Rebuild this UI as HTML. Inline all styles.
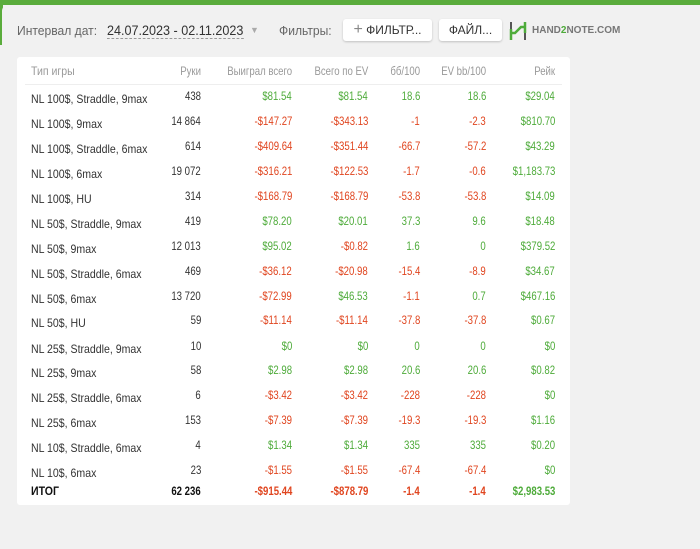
<!DOCTYPE html>
<html><head><meta charset="utf-8"><style>
body{margin:0;width:700px;height:549px;background:#f1f1f1;font-family:"Liberation Sans",sans-serif;position:relative;overflow:hidden}
.gt{position:absolute;left:0;top:0;width:700px;height:5px;background:#5aac3c}
.gl{position:absolute;left:0;top:0;width:3px;height:45px;background:#5aac3c}
.in{position:absolute;left:2px;top:5px;width:698px;height:544px;background:#f1f1f1;border-top-left-radius:6px}
.t{position:absolute;font-size:13px;color:#666;white-space:nowrap}
.btn{position:absolute;top:19px;height:22px;background:#fff;border-radius:3px;box-shadow:0 1px 2px rgba(0,0,0,.2);font-size:12px;color:#333;line-height:22px;text-align:center}
.card{position:absolute;left:17px;top:57px;width:553px;height:448px;background:#fff;border-radius:3px}
.r{position:absolute;left:0;width:553px;height:16px;font-size:12px;color:#333}
.r span{position:absolute;top:0;white-space:nowrap;transform:scaleX(.8);transform-origin:right}
.r .n{left:14px;top:3px;transform:scaleX(.88);transform-origin:left}
.r .c1{right:369px}.r .c2{right:278px}.r .c3{right:202px}.r .c4{right:150px}.r .c5{right:84px}.r .c6{right:15px}
.g{color:#4eab3a}.d{color:#e0451f}
.h{color:#999}
.b{font-weight:bold;color:#111}
</style></head><body>
<div class="gt"></div><div class="gl"></div><div class="in"></div>
<div class="t" style="left:17px;top:23px;transform:scaleX(.93);transform-origin:left">Интервал дат:</div>
<div class="t" style="left:107px;top:22px;color:#333;font-size:14px;border-bottom:1px dashed #999;transform:scaleX(.9);transform-origin:left">24.07.2023 - 02.11.2023</div>
<div class="t" style="left:250px;top:25px;color:#aaa;font-size:9px">▼</div>
<div class="t" style="left:279px;top:23px;transform:scaleX(.93);transform-origin:left">Фильтры:</div>
<div class="btn" style="left:343px;width:89px"><span style="color:#888;font-size:16px">+</span> ФИЛЬТР...</div>
<div class="btn" style="left:439px;width:63px">ФАЙЛ...</div>
<svg style="position:absolute;left:508px;top:20px" width="20" height="22"><path d="M3 2v7M17 13v7" stroke="#555" stroke-width="2" fill="none"/><path d="M3 9v11M17 2v11M3 13h4l6-6h4" stroke="#4eab3a" stroke-width="2.5" fill="none"/></svg>
<div class="t" style="left:532px;top:25px;font-size:10px;font-weight:bold;color:#777">HAND<span style="color:#4eab3a">2</span>NOTE.COM</div>
<div class="card">
<div class="r h" style="top:7px"><span class="n" style="top:0">Тип игры</span><span class="c1">Руки</span><span class="c2">Выиграл всего</span><span class="c3">Всего по EV</span><span class="c4">бб/100</span><span class="c5">EV bb/100</span><span class="c6">Рейк</span></div>
<div style="position:absolute;left:8px;right:8px;top:27px;border-top:1px solid #eee"></div>
<div class="r" style="top:32px"><span class="n">NL 100$, Straddle, 9max</span><span class="c1">438</span><span class="c2 g">$81.54</span><span class="c3 g">$81.54</span><span class="c4 g">18.6</span><span class="c5 g">18.6</span><span class="c6 g">$29.04</span></div>
<div class="r" style="top:57px"><span class="n">NL 100$, 9max</span><span class="c1">14 864</span><span class="c2 d">-$147.27</span><span class="c3 d">-$343.13</span><span class="c4 d">-1</span><span class="c5 d">-2.3</span><span class="c6 g">$810.70</span></div>
<div class="r" style="top:82px"><span class="n">NL 100$, Straddle, 6max</span><span class="c1">614</span><span class="c2 d">-$409.64</span><span class="c3 d">-$351.44</span><span class="c4 d">-66.7</span><span class="c5 d">-57.2</span><span class="c6 g">$43.29</span></div>
<div class="r" style="top:107px"><span class="n">NL 100$, 6max</span><span class="c1">19 072</span><span class="c2 d">-$316.21</span><span class="c3 d">-$122.53</span><span class="c4 d">-1.7</span><span class="c5 d">-0.6</span><span class="c6 g">$1,183.73</span></div>
<div class="r" style="top:132px"><span class="n">NL 100$, HU</span><span class="c1">314</span><span class="c2 d">-$168.79</span><span class="c3 d">-$168.79</span><span class="c4 d">-53.8</span><span class="c5 d">-53.8</span><span class="c6 g">$14.09</span></div>
<div class="r" style="top:157px"><span class="n">NL 50$, Straddle, 9max</span><span class="c1">419</span><span class="c2 g">$78.20</span><span class="c3 g">$20.01</span><span class="c4 g">37.3</span><span class="c5 g">9.6</span><span class="c6 g">$18.48</span></div>
<div class="r" style="top:182px"><span class="n">NL 50$, 9max</span><span class="c1">12 013</span><span class="c2 g">$95.02</span><span class="c3 d">-$0.82</span><span class="c4 g">1.6</span><span class="c5 g">0</span><span class="c6 g">$379.52</span></div>
<div class="r" style="top:207px"><span class="n">NL 50$, Straddle, 6max</span><span class="c1">469</span><span class="c2 d">-$36.12</span><span class="c3 d">-$20.98</span><span class="c4 d">-15.4</span><span class="c5 d">-8.9</span><span class="c6 g">$34.67</span></div>
<div class="r" style="top:232px"><span class="n">NL 50$, 6max</span><span class="c1">13 720</span><span class="c2 d">-$72.99</span><span class="c3 g">$46.53</span><span class="c4 d">-1.1</span><span class="c5 g">0.7</span><span class="c6 g">$467.16</span></div>
<div class="r" style="top:256px"><span class="n">NL 50$, HU</span><span class="c1">59</span><span class="c2 d">-$11.14</span><span class="c3 d">-$11.14</span><span class="c4 d">-37.8</span><span class="c5 d">-37.8</span><span class="c6 g">$0.67</span></div>
<div class="r" style="top:282px"><span class="n">NL 25$, Straddle, 9max</span><span class="c1">10</span><span class="c2 g">$0</span><span class="c3 g">$0</span><span class="c4 g">0</span><span class="c5 g">0</span><span class="c6 g">$0</span></div>
<div class="r" style="top:306px"><span class="n">NL 25$, 9max</span><span class="c1">58</span><span class="c2 g">$2.98</span><span class="c3 g">$2.98</span><span class="c4 g">20.6</span><span class="c5 g">20.6</span><span class="c6 g">$0.82</span></div>
<div class="r" style="top:331px"><span class="n">NL 25$, Straddle, 6max</span><span class="c1">6</span><span class="c2 d">-$3.42</span><span class="c3 d">-$3.42</span><span class="c4 d">-228</span><span class="c5 d">-228</span><span class="c6 g">$0</span></div>
<div class="r" style="top:356px"><span class="n">NL 25$, 6max</span><span class="c1">153</span><span class="c2 d">-$7.39</span><span class="c3 d">-$7.39</span><span class="c4 d">-19.3</span><span class="c5 d">-19.3</span><span class="c6 g">$1.16</span></div>
<div class="r" style="top:381px"><span class="n">NL 10$, Straddle, 6max</span><span class="c1">4</span><span class="c2 g">$1.34</span><span class="c3 g">$1.34</span><span class="c4 g">335</span><span class="c5 g">335</span><span class="c6 g">$0.20</span></div>
<div class="r" style="top:406px"><span class="n">NL 10$, 6max</span><span class="c1">23</span><span class="c2 d">-$1.55</span><span class="c3 d">-$1.55</span><span class="c4 d">-67.4</span><span class="c5 d">-67.4</span><span class="c6 g">$0</span></div>
<div class="r" style="top:427px;font-weight:bold"><span class="n b" style="top:0">ИТОГ</span><span class="c1 b">62 236</span><span class="c2 d">-$915.44</span><span class="c3 d">-$878.79</span><span class="c4 d">-1.4</span><span class="c5 d">-1.4</span><span class="c6 g">$2,983.53</span></div>
</div>
</body></html>
